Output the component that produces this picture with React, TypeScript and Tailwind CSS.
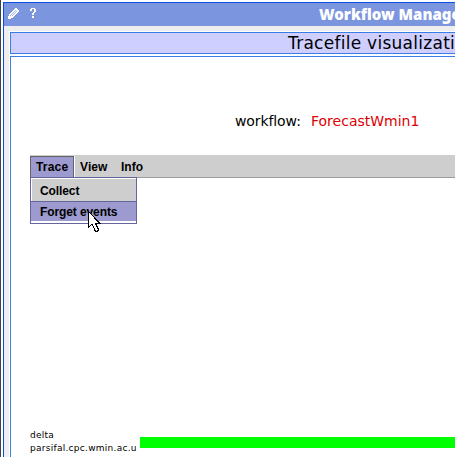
import React from "react";

function Pencil() {
  return (
    <svg width="11" height="11" viewBox="0 0 11 11" shapeRendering="crispEdges" className="ml-1 mt-[5px] shrink-0">
      <path d="M7 0h2v1h1v1h1v2h-1v1h-1v1h-1v1h-1v1h-1v1h-1v1h-2v1h-3v-3h1v-2h1v-1h1v-1h1v-1h1v-1h1v-1h1z" fill="#fff" />
      <path d="M7 2h1v1h-1zM6 3h1v1h-1zM8 3h1v1h-1zM5 4h1v1h-1zM7 4h1v1h-1zM4 5h1v1h-1zM6 5h1v1h-1zM3 6h1v1h-1zM5 6h1v1h-1zM2 7h1v1h-1zM4 7h1v1h-1z" fill="#a9baea" />
    </svg>
  );
}

function Question() {
  return (
    <svg width="6" height="10" viewBox="0 0 6 10" shapeRendering="crispEdges" className="ml-[11px] mt-[5px] shrink-0">
      <path d="M1 0h4v1h1v3h-1v1h-1v2h-2v-2h1v-1h1v-3h-2v2h-2v-2h1zM2 8h2v2h-2z" fill="#fff" />
    </svg>
  );
}

function Cursor() {
  return (
    <svg width="13" height="21" viewBox="0 0 13 21" shapeRendering="crispEdges" className="absolute left-[88px] top-[211px]">
      <path d="M.5 .5V16.5L4 13L7.5 20.5H9.5L10.5 18.5L7.5 12.5H12Z" fill="#fff" stroke="#000" />
    </svg>
  );
}

export default function App() {
  return (
    <div className="relative flex h-[457px] w-[455px] overflow-hidden whitespace-nowrap bg-white text-black">
      <div className="w-px shrink-0 bg-[#424242]" />
      <div className="ml-[2px] mt-[2px] flex w-[452px] shrink-0 flex-col border-l border-t border-[#0851e0] bg-[#eeeeee]">
        <header className="flex h-[23px] shrink-0 items-start bg-[#7b96de]">
          <Pencil />
          <Question />
          <h1 className="ml-[283px] mt-px font-['Noto_Sans','sans-serif'] text-[15px] font-black leading-5 text-white">Workflow Manage</h1>
        </header>
        <main className="ml-[5px] mt-[5px] flex grow flex-col border-l border-t border-white bg-white">
          <div className="h-[22px] shrink-0 border-y border-l border-[#3a7de7] bg-[#ceceff] pl-[277px] font-['DejaVu_Sans','sans-serif'] text-[17px] leading-5 tracking-[0.27px]">Tracefile visualizati</div>
          <section className="mt-[2px] flex grow flex-col border-l border-t border-[#3a7de7]">
            <p className="ml-[224px] mt-[54px] flex h-5 shrink-0 font-['DejaVu_Sans','sans-serif'] text-[14px] leading-5">
              <span className="w-[76px] tracking-[-0.1px]">workflow:</span>
              <span className="text-[#de0000]">ForecastWmin1</span>
            </p>
            <nav className="ml-[19px] mt-6 flex h-[23px] shrink-0 border-b border-[#9c9c9c] bg-[#cecece] font-['Liberation_Sans','sans-serif'] text-[12px] font-bold leading-[22px]">
              <span className="mt-px h-[21px] w-[44px] border-l border-r border-t border-[#636363] bg-[#9c9ace] pl-[5px] leading-5 tracking-[0.2px]">Trace</span>
              <span className="mt-px h-[21px] w-[47px] border-l border-white pl-[5px] tracking-[0.1px]">View</span>
              <span className="pt-px">Info</span>
            </nav>
            <div className="-mt-px ml-[19px] h-[47px] w-[107px] shrink-0 border border-[#63659c] bg-white font-['Liberation_Sans','sans-serif'] text-[12px] font-bold">
              <div className="ml-px mt-px h-[22px] bg-[#cecece] pl-2 leading-[24px] tracking-[-0.1px]">Collect</div>
              <div className="h-[20px] border-t border-[#63659c] bg-[#9c9ace] pl-[9px] leading-5 tracking-[-0.1px]">Forget events</div>
            </div>
            <footer className="mb-px mt-auto flex items-start font-['DejaVu_Sans','sans-serif'] text-[9px] leading-[13px]">
              <div className="ml-[19px] h-[27px] w-[110px] tracking-[0.27px]">
                <div>delta</div>
                <div>parsifal.cpc.wmin.ac.u</div>
              </div>
              <div className="mt-2 h-[11px] grow bg-[#00ff00]" />
            </footer>
          </section>
        </main>
      </div>
      <Cursor />
    </div>
  );
}
